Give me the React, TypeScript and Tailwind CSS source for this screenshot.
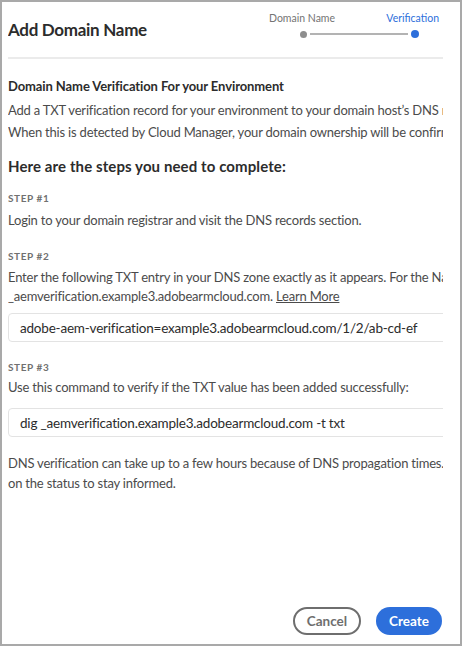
import React from "react";

const font = { fontFamily: "Lato, 'Liberation Sans', sans-serif" };

function StepLabel({ children, className }: { children: React.ReactNode; className: string }) {
  return (
    <div
      className={`text-[10px] font-bold tracking-[0.06em] text-[#707070] uppercase leading-[14px] ${className}`}
    >
      {children}
    </div>
  );
}

function CodeBox({ value, className }: { value: string; className: string }) {
  return (
    <div
      className={`h-[29px] w-[460px] border border-[#e3e3e3] rounded-[4px] flex items-center pl-[11px] text-[13.5px] text-[#2c2c2c] whitespace-nowrap ${className}`}
    >
      {value}
    </div>
  );
}

export default function App() {
  return (
    <div
      className="w-[462px] h-[646px] bg-white border-2 border-[#a9a9a9] flex flex-col overflow-hidden"
      style={font}
    >
      <div className="ml-[6px] w-[435px] overflow-hidden flex-1 flex flex-col">
        {/* header */}
        <div className="flex items-start justify-between pt-[9px]">
          <h1 className="mt-[8px] text-[17px] font-bold tracking-[-0.3px] text-[#2c2c2c] leading-[22px]">
            Add Domain Name
          </h1>
          <div className="w-[170px] mr-[4px]">
            <div className="flex justify-between text-[10.5px] leading-[14px]">
              <span className="text-[#747474]">Domain Name</span>
              <span className="text-[#2d6fdb]">Verification</span>
            </div>
            <div className="flex items-center h-[8px] mt-[5px] pl-[31px] pr-[20px]">
              <span className="w-[7px] h-[7px] rounded-full bg-[#8e8e8e]" />
              <span className="flex-1 h-[2px] bg-[#b3b3b3] mx-[3px]" />
              <span className="w-[8px] h-[8px] rounded-full bg-[#2d6fdb]" />
            </div>
          </div>
        </div>
        <div className="mt-[16px] h-[2px] bg-[#ebebeb]" />

        {/* body */}
        <div className="text-[13px] tracking-[-0.2px] leading-[20px] text-[#4b4b4b] whitespace-nowrap">
          <div className="mt-[17px] font-bold tracking-[-0.1px] text-[#2c2c2c]">
            Domain Name Verification For your Environment
          </div>
          <div className="mt-[4px]">
            Add a TXT verification record for your environment to your domain host’s DNS records.
          </div>
          <div className="mt-[2px]">
            When this is detected by Cloud Manager, your domain ownership will be confirmed.
          </div>
          <div className="mt-[14px] text-[15px] tracking-[0.1px] font-bold text-[#2c2c2c]">
            Here are the steps you need to complete:
          </div>

          <StepLabel className="mt-[15px]">Step #1</StepLabel>
          <div className="mt-[5px]">Login to your domain registrar and visit the DNS records section.</div>

          <StepLabel className="mt-[19px]">Step #2</StepLabel>
          <div className="mt-[4px]">
            Enter the following TXT entry in your DNS zone exactly as it appears. For the Name field use
          </div>
          <div className="-mt-[1px]">
            _aemverification.example3.adobearmcloud.com.{" "}
            <a className="underline text-[#4b4b4b]">Learn More</a>
          </div>
          <CodeBox
            className="mt-[7px]"
            value="adobe-aem-verification=example3.adobearmcloud.com/1/2/ab-cd-ef"
          />

          <StepLabel className="mt-[18px]">Step #3</StepLabel>
          <div className="mt-[3px]">Use this command to verify if the TXT value has been added successfully:</div>
          <CodeBox className="mt-[11px]" value="dig _aemverification.example3.adobearmcloud.com -t txt" />

          <div className="mt-[16px]">
            DNS verification can take up to a few hours because of DNS propagation times. Check back
          </div>
          <div>on the status to stay informed.</div>
        </div>

        {/* footer */}
        <div className="mt-auto mb-[9px] mr-[1px] flex justify-end gap-[15px]">
          <button className="h-[28px] w-[68px] rounded-full border-2 border-[#6e6e6e] text-[13.5px] font-bold text-[#6e6e6e]">
            Cancel
          </button>
          <button className="h-[28px] w-[66px] rounded-full bg-[#2d6fdb] text-[13.5px] font-bold text-white">
            Create
          </button>
        </div>
      </div>
    </div>
  );
}
